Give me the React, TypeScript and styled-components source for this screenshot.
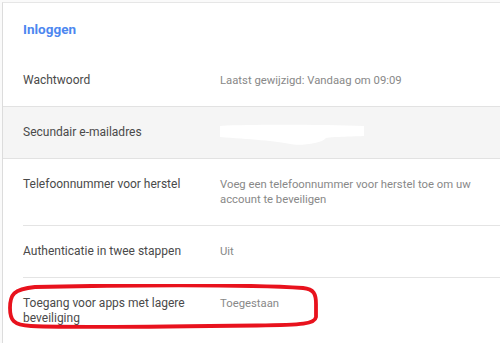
import styled, { createGlobalStyle } from "styled-components"

const GlobalStyle = createGlobalStyle`
    html, body {
        margin: 0;
        padding: 0;
        background: #fafafa;
        font-family: Roboto, "Liberation Sans", Arial, sans-serif;
    }
`

const Page = styled.div`
    width: 500px;
    height: 343px;
    overflow: hidden;
    padding: 2px 0 0 2px;
    box-sizing: border-box;
`
const Card = styled.section`
    background: #fff;
    border-top: 1px solid #e6e6e6;
    border-left: 1px solid #dcdcdc;
    min-height: 400px;
`
const Title = styled.h2`
    margin: 0;
    padding: 16px 0 16px 20px;
    font-size: 13.5px;
    line-height: 20px;
    font-weight: 700;
    color: #4d87f0;
`
type Divider = "none" | "inset" | "full"

const Row = styled.div<{ $divider: Divider; $active?: boolean }>`
    position: relative;
    padding-left: ${(p) => (p.$divider === "full" ? "0" : "20px")};
    background: ${(p) => (p.$active ? "#f5f5f5" : "transparent")};
    border-top: ${(p) => (p.$divider === "full" ? "1px solid #e2e2e2" : "none")};
`
const RowInner = styled.div<{ $divider: Divider }>`
    display: grid;
    grid-template-columns: 197px 262px;
    padding: 18px 0;
    padding-left: ${(p) => (p.$divider === "full" ? "20px" : "0")};
    border-top: ${(p) => (p.$divider === "inset" ? "1px solid #e4e4e4" : "none")};
    font-size: 12px;
    line-height: 15px;
`
const Label = styled.div`
    color: #4a4a4a;
    padding-right: 16px;
`
const Value = styled.div`
    color: #888;
    font-size: 11.3px;
`
const Redacted = styled.svg`
    display: block;
    margin: -1px 0 -6px -2px;
`
const Circle = styled.svg`
    position: absolute;
    left: 4px;
    top: 7px;
    pointer-events: none;
`

const rows: { label: string; value?: string; divider: Divider; active?: boolean; circled?: boolean }[] = [
    { label: "Wachtwoord", value: "Laatst gewijzigd: Vandaag om 09:09", divider: "none" },
    { label: "Secundair e-mailadres", divider: "full", active: true },
    {
        label: "Telefoonnummer voor herstel",
        value: "Voeg een telefoonnummer voor herstel toe om uw account te beveiligen",
        divider: "full",
    },
    { label: "Authenticatie in twee stappen", value: "Uit", divider: "inset" },
    { label: "Toegang voor apps met lagere beveiliging", value: "Toegestaan", divider: "inset", circled: true },
]

export default function App() {
    return (
        <Page>
            <GlobalStyle />
            <Card>
                <Title>Inloggen</Title>
                {rows.map((row) => (
                    <Row key={row.label} $divider={row.divider} $active={row.active}>
                        <RowInner $divider={row.divider}>
                            <Label>{row.label}</Label>
                            {row.value ? (
                                <Value>{row.value}</Value>
                            ) : (
                                <Redacted width="150" height="22" viewBox="0 0 150 22">
                                    <path
                                        d="M2 2 C40 0 110 1 146 2 L146 12 C120 13 112 13 108 14 C104 20 80 22 72 20 C60 17 30 15 2 13 Z"
                                        fill="#fff"
                                    />
                                </Redacted>
                            )}
                        </RowInner>
                        {row.circled && (
                            <Circle width="314" height="46" viewBox="0 0 314 46">
                                <path
                                    d="M28 3 C110 1 240 0 296 4 C307 5 309 10 309 20 L309 33 C308 40 296 41 250 41.5 C180 42.5 70 44 24 42 C6 41 3 36 3 24 C3 11 6 5 28 3 Z"
                                    fill="none"
                                    stroke="#e8121d"
                                    strokeWidth="3.8"
                                    strokeLinejoin="round"
                                />
                            </Circle>
                        )}
                    </Row>
                ))}
            </Card>
        </Page>
    )
}
